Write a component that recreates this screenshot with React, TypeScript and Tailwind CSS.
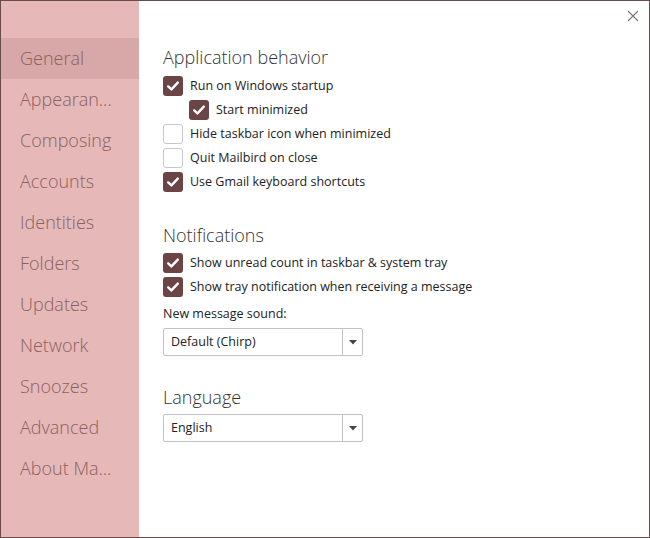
import { useState } from 'react';

const NAV = ['General', 'Appearan...', 'Composing', 'Accounts', 'Identities', 'Folders', 'Updates', 'Network', 'Snoozes', 'Advanced', 'About Ma...'];

function Check({ checked }: { checked: boolean }) {
  return checked ? (
    <span className="flex h-5 w-5 shrink-0 items-center justify-center rounded-[3px] bg-[#6b4545]">
      <svg width="14" height="14" viewBox="0 0 14 14" fill="none">
        <path d="M2.2 7.4 L5.4 10.4 L11.8 3.6" stroke="#fff" strokeWidth="2.4" strokeLinecap="round" strokeLinejoin="round" />
      </svg>
    </span>
  ) : (
    <span className="h-5 w-5 shrink-0 rounded-[3px] border border-[#c9c9c9] bg-white" />
  );
}

function Option({ label, checked, nested }: { label: string; checked: boolean; nested?: boolean }) {
  return (
    <label className={`flex h-6 items-center gap-[7px] ${nested ? 'pl-[26px]' : ''}`}>
      <Check checked={checked} />
      <span className="text-[12.5px] text-[#222]">{label}</span>
    </label>
  );
}

function Select({ value }: { value: string }) {
  return (
    <div className="flex h-[28px] w-[200px] items-center rounded-[2px] border border-[#c3c3c3] bg-white">
      <span className="flex-1 pl-[7px] text-[12.5px] text-[#222]">{value}</span>
      <span className="flex h-full w-[20px] items-center justify-center border-l border-[#c3c3c3]">
        <svg width="8" height="5" viewBox="0 0 8 5">
          <path d="M0 0 H8 L4 4.5 Z" fill="#444" />
        </svg>
      </span>
    </div>
  );
}

export default function App() {
  const [active] = useState(0);
  return (
    <div className="flex h-[538px] w-[650px] border border-[#6b4a4a] bg-white font-['Open_Sans','Noto_Sans',sans-serif]">
      <nav className="flex w-[138px] shrink-0 flex-col bg-[#e6b8b8] pt-[37px]">
        {NAV.map((item, i) => (
          <div
            key={item}
            className={`flex h-[41px] items-center pl-[19px] text-[18px] font-light text-[#8a6262] ${i === active ? 'bg-[#d8a7a7]' : ''}`}
          >
            {item}
          </div>
        ))}
      </nav>
      <main className="relative flex-1 pl-[24px] pt-[43px]">
        <button className="absolute right-[10px] top-[9px] text-[#666]">
          <svg width="12" height="12" viewBox="0 0 12 12">
            <path d="M1 1 L11 11 M11 1 L1 11" stroke="#777" strokeWidth="1.1" />
          </svg>
        </button>

        <h2 className="mb-[4px] text-[18px] leading-[26px] font-light text-[#333]">Application behavior</h2>
        <Option label="Run on Windows startup" checked />
        <Option label="Start minimized" checked nested />
        <Option label="Hide taskbar icon when minimized" checked={false} />
        <Option label="Quit Mailbird on close" checked={false} />
        <Option label="Use Gmail keyboard shortcuts" checked />

        <h2 className="mt-[28px] mb-[3px] text-[18px] leading-[26px] font-light text-[#333]">Notifications</h2>
        <Option label="Show unread count in taskbar & system tray" checked />
        <Option label="Show tray notification when receiving a message" checked />
        <p className="mt-[7px] mb-[6px] text-[12.5px] leading-[16px] text-[#222]">New message sound:</p>
        <Select value="Default (Chirp)" />

        <h2 className="mt-[28px] mb-[4px] text-[18px] leading-[26px] font-light text-[#333]">Language</h2>
        <Select value="English" />
      </main>
    </div>
  );
}
